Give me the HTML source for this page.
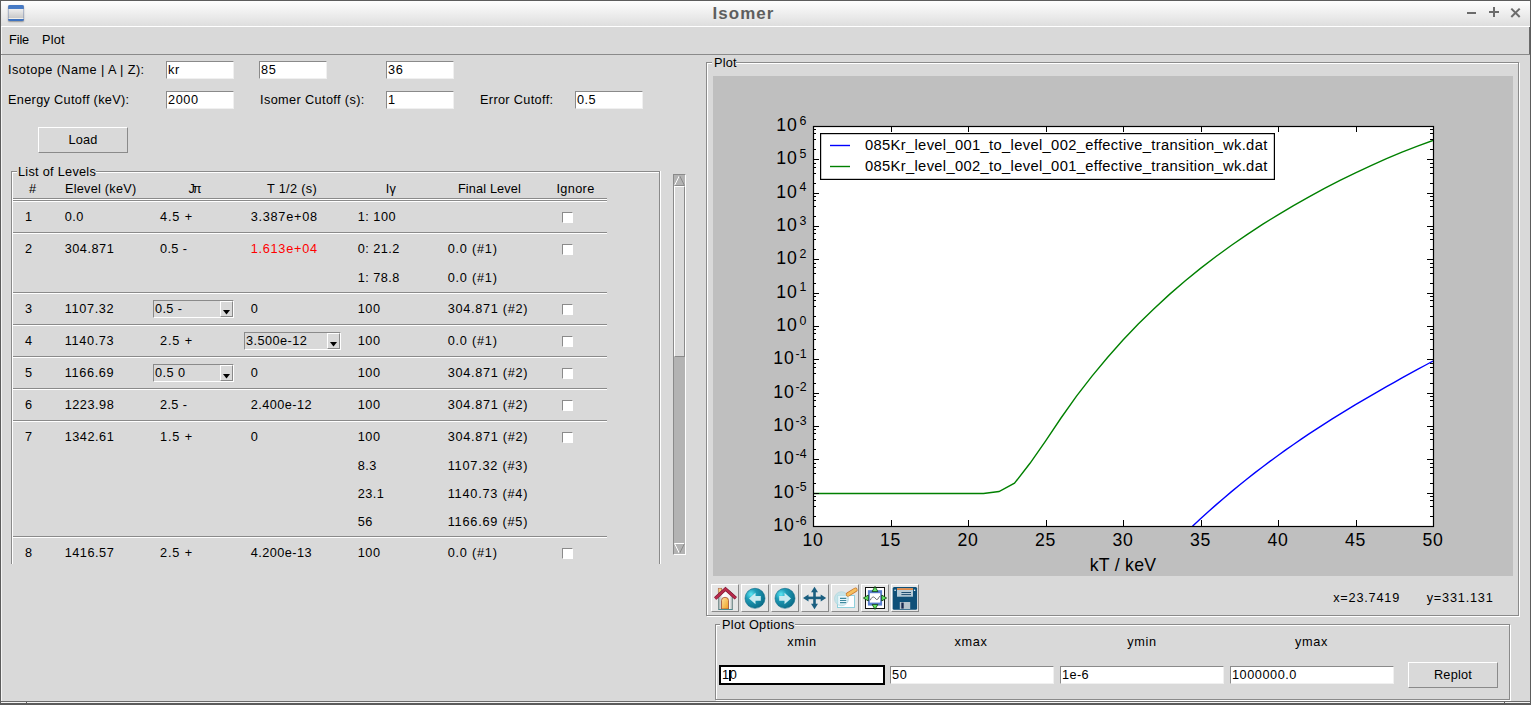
<!DOCTYPE html>
<html><head><meta charset="utf-8"><title>Isomer</title>
<style>
html,body{margin:0;padding:0;}
body{width:1531px;height:705px;overflow:hidden;background:#d9d9d9;position:relative;font-family:"Liberation Sans",sans-serif;}
body>div,body>svg{position:absolute;}
.t{position:absolute;white-space:pre;line-height:1;color:#000;}
</style></head><body>
<div style="left:0;top:0;width:1531px;height:26px;background:linear-gradient(#ffffff,#dedede)"></div>
<div style="left:0px;top:0px;width:1531px;height:1px;background:#5c5c5c"></div>
<div style="left:1px;top:26px;width:1529px;height:1px;background:#ffffff"></div>
<div style="left:0px;top:0px;width:1px;height:705px;background:#5c5c5c"></div>
<div style="left:1px;top:27px;width:1px;height:674px;background:#f4f4f4"></div>
<div style="left:1530px;top:0px;width:1px;height:705px;background:#5c5c5c"></div>
<div style="left:1529px;top:27px;width:1px;height:27px;background:#6a6a6a"></div>
<div style="left:1px;top:54px;width:1529px;height:1px;background:#8a8a8a"></div>
<div style="left:1px;top:701px;width:1529px;height:1px;background:#6a6a6a"></div>
<div style="left:1px;top:702px;width:1529px;height:1px;background:#f4f4f4"></div>
<div style="left:0px;top:703px;width:1531px;height:2px;background:#5c5c5c"></div>
<div style="left:26px;top:702px;width:1px;height:3px;background:#5c5c5c"></div>
<div style="left:1504px;top:702px;width:1px;height:3px;background:#5c5c5c"></div>
<div style="left:8px;top:5px;width:16px;height:15.5px;border-radius:1.5px;background:linear-gradient(#4277c4 0,#4a7dc6 4.5px,#ececec 4.5px,#c9c9c9 13px,#f0eee8 13px,#f0eee8 14px,#3f73c0 14px,#3f73c0 15.5px);box-shadow:0 1px 1.5px rgba(0,0,0,.35), inset 1px 0 0 rgba(110,130,170,.45), inset -1px 0 0 rgba(110,130,170,.45)"></div>
<div style="left:1467px;top:12px;width:9px;height:2px;background:#6b6b6b"></div>
<div style="left:1489px;top:11px;width:10px;height:2px;background:#6b6b6b"></div>
<div style="left:1493px;top:7px;width:2px;height:10px;background:#6b6b6b"></div>
<svg style="left:1508px;top:6px" width="14" height="14"><path d="M3.3 2.6L11.7 11M11.7 2.6L3.3 11" stroke="#6b6b6b" stroke-width="2"/></svg>
<div style="left:166px;top:61px;width:68px;height:18px;background:#fff;border-style:solid;border-width:1px;border-color:#8a8a8a #f0f0f0 #f0f0f0 #8a8a8a;box-sizing:border-box"></div>
<div style="left:259px;top:61px;width:68px;height:18px;background:#fff;border-style:solid;border-width:1px;border-color:#8a8a8a #f0f0f0 #f0f0f0 #8a8a8a;box-sizing:border-box"></div>
<div style="left:386px;top:61px;width:68px;height:18px;background:#fff;border-style:solid;border-width:1px;border-color:#8a8a8a #f0f0f0 #f0f0f0 #8a8a8a;box-sizing:border-box"></div>
<div style="left:166px;top:91px;width:68px;height:18px;background:#fff;border-style:solid;border-width:1px;border-color:#8a8a8a #f0f0f0 #f0f0f0 #8a8a8a;box-sizing:border-box"></div>
<div style="left:386px;top:91px;width:68px;height:18px;background:#fff;border-style:solid;border-width:1px;border-color:#8a8a8a #f0f0f0 #f0f0f0 #8a8a8a;box-sizing:border-box"></div>
<div style="left:575px;top:91px;width:68px;height:18px;background:#fff;border-style:solid;border-width:1px;border-color:#8a8a8a #f0f0f0 #f0f0f0 #8a8a8a;box-sizing:border-box"></div>
<div style="left:38px;top:127px;width:90px;height:26px;background:#d9d9d9;border-style:solid;border-width:1px;border-color:#ffffff #8a8a8a #8a8a8a #ffffff;box-sizing:border-box"></div>
<div style="left:11px;top:171px;width:649px;height:1px;background:#8a8a8a"></div>
<div style="left:12px;top:172px;width:648px;height:1px;background:#ffffff"></div>
<div style="left:11px;top:171px;width:1px;height:393px;background:#8a8a8a"></div>
<div style="left:12px;top:172px;width:1px;height:392px;background:#ffffff"></div>
<div style="left:659px;top:172px;width:1px;height:392px;background:#8a8a8a"></div>
<div style="left:660px;top:171px;width:1px;height:393px;background:#ffffff"></div>
<div style="left:17px;top:160px;width:79px;height:18px;background:#d9d9d9"></div>
<div style="left:13px;top:198px;width:594px;height:1px;background:#8a8a8a"></div>
<div style="left:13px;top:199px;width:594px;height:1px;background:#ffffff"></div>
<div style="left:13px;top:200px;width:594px;height:1px;background:#8a8a8a"></div>
<div style="left:13px;top:201px;width:594px;height:1px;background:#ffffff"></div>
<div style="left:13px;top:232px;width:594px;height:1px;background:#8a8a8a"></div>
<div style="left:13px;top:233px;width:594px;height:1px;background:#ffffff"></div>
<div style="left:13px;top:292px;width:594px;height:1px;background:#8a8a8a"></div>
<div style="left:13px;top:293px;width:594px;height:1px;background:#ffffff"></div>
<div style="left:13px;top:324px;width:594px;height:1px;background:#8a8a8a"></div>
<div style="left:13px;top:325px;width:594px;height:1px;background:#ffffff"></div>
<div style="left:13px;top:356px;width:594px;height:1px;background:#8a8a8a"></div>
<div style="left:13px;top:357px;width:594px;height:1px;background:#ffffff"></div>
<div style="left:13px;top:388px;width:594px;height:1px;background:#8a8a8a"></div>
<div style="left:13px;top:389px;width:594px;height:1px;background:#ffffff"></div>
<div style="left:13px;top:420px;width:594px;height:1px;background:#8a8a8a"></div>
<div style="left:13px;top:421px;width:594px;height:1px;background:#ffffff"></div>
<div style="left:13px;top:536px;width:594px;height:1px;background:#8a8a8a"></div>
<div style="left:13px;top:537px;width:594px;height:1px;background:#ffffff"></div>
<div style="left:562px;top:212px;width:11px;height:11px;background:#fff;border-style:solid;border-width:1px;border-color:#8a8a8a #fff #fff #8a8a8a;box-sizing:border-box"></div>
<div style="left:562px;top:244px;width:11px;height:11px;background:#fff;border-style:solid;border-width:1px;border-color:#8a8a8a #fff #fff #8a8a8a;box-sizing:border-box"></div>
<div style="left:562px;top:304px;width:11px;height:11px;background:#fff;border-style:solid;border-width:1px;border-color:#8a8a8a #fff #fff #8a8a8a;box-sizing:border-box"></div>
<div style="left:562px;top:336px;width:11px;height:11px;background:#fff;border-style:solid;border-width:1px;border-color:#8a8a8a #fff #fff #8a8a8a;box-sizing:border-box"></div>
<div style="left:562px;top:368px;width:11px;height:11px;background:#fff;border-style:solid;border-width:1px;border-color:#8a8a8a #fff #fff #8a8a8a;box-sizing:border-box"></div>
<div style="left:562px;top:400px;width:11px;height:11px;background:#fff;border-style:solid;border-width:1px;border-color:#8a8a8a #fff #fff #8a8a8a;box-sizing:border-box"></div>
<div style="left:562px;top:432px;width:11px;height:11px;background:#fff;border-style:solid;border-width:1px;border-color:#8a8a8a #fff #fff #8a8a8a;box-sizing:border-box"></div>
<div style="left:562px;top:548px;width:11px;height:11px;background:#fff;border-style:solid;border-width:1px;border-color:#8a8a8a #fff #fff #8a8a8a;box-sizing:border-box"></div>
<div style="left:153px;top:300px;width:81px;height:18px;background:#d9d9d9;border-style:solid;border-width:1px;border-color:#8a8a8a #ffffff #ffffff #8a8a8a;box-sizing:border-box"></div>
<div style="left:220px;top:301px;width:13px;height:16px;background:#d9d9d9;border-style:solid;border-width:1px;border-color:#ffffff #8a8a8a #8a8a8a #ffffff;box-sizing:border-box"></div>
<svg style="left:223px;top:310px" width="8" height="5"><path d="M0 0H7L3.5 4.5Z" fill="#000"/></svg>
<div style="left:244px;top:332px;width:97px;height:18px;background:#d9d9d9;border-style:solid;border-width:1px;border-color:#8a8a8a #ffffff #ffffff #8a8a8a;box-sizing:border-box"></div>
<div style="left:327px;top:333px;width:13px;height:16px;background:#d9d9d9;border-style:solid;border-width:1px;border-color:#ffffff #8a8a8a #8a8a8a #ffffff;box-sizing:border-box"></div>
<svg style="left:330px;top:342px" width="8" height="5"><path d="M0 0H7L3.5 4.5Z" fill="#000"/></svg>
<div style="left:153px;top:364px;width:81px;height:18px;background:#d9d9d9;border-style:solid;border-width:1px;border-color:#8a8a8a #ffffff #ffffff #8a8a8a;box-sizing:border-box"></div>
<div style="left:220px;top:365px;width:13px;height:16px;background:#d9d9d9;border-style:solid;border-width:1px;border-color:#ffffff #8a8a8a #8a8a8a #ffffff;box-sizing:border-box"></div>
<svg style="left:223px;top:374px" width="8" height="5"><path d="M0 0H7L3.5 4.5Z" fill="#000"/></svg>
<div style="left:673px;top:174px;width:13px;height:381px;background:#b3b3b3;border-style:solid;border-width:1px;border-color:#8a8a8a #ffffff #ffffff #8a8a8a;box-sizing:border-box"></div>
<svg style="left:674px;top:175px" width="11" height="11"><path d="M0.5 10.5L5.5 0.5" stroke="#fff"/><path d="M5.5 0.5L10.5 10.5" stroke="#8a8a8a"/><path d="M0.5 10.5H10.5" stroke="#8a8a8a"/></svg>
<div style="left:674px;top:186px;width:11px;height:171px;background:#d9d9d9;border-style:solid;border-width:1px;border-color:#ffffff #8a8a8a #8a8a8a #ffffff;box-sizing:border-box"></div>
<svg style="left:674px;top:543px" width="11" height="11"><path d="M0.5 0.5H10.5" stroke="#fff"/><path d="M0.5 0.5L5.5 10.5" stroke="#fff"/><path d="M10.5 0.5L5.5 10.5" stroke="#8a8a8a"/></svg>
<div style="left:707px;top:63px;width:813px;height:554px;border:1px solid #ffffff;box-sizing:border-box"></div>
<div style="left:706px;top:62px;width:813px;height:554px;border:1px solid #8a8a8a;box-sizing:border-box"></div>
<div style="left:712px;top:55px;width:24px;height:16px;background:#d9d9d9"></div>
<div style="left:713px;top:76px;width:800px;height:500px;background:#bfbfbf"></div>
<div style="left:711px;top:584px;width:28px;height:28px;background:#e6e6e6;border-style:solid;border-width:1px;border-color:#ffffff #8a8a8a #8a8a8a #ffffff;box-sizing:border-box"></div>
<div style="left:741px;top:584px;width:28px;height:28px;background:#e6e6e6;border-style:solid;border-width:1px;border-color:#ffffff #8a8a8a #8a8a8a #ffffff;box-sizing:border-box"></div>
<div style="left:771px;top:584px;width:28px;height:28px;background:#e6e6e6;border-style:solid;border-width:1px;border-color:#ffffff #8a8a8a #8a8a8a #ffffff;box-sizing:border-box"></div>
<div style="left:801px;top:584px;width:28px;height:28px;background:#e6e6e6;border-style:solid;border-width:1px;border-color:#ffffff #8a8a8a #8a8a8a #ffffff;box-sizing:border-box"></div>
<div style="left:831px;top:584px;width:28px;height:28px;background:#e6e6e6;border-style:solid;border-width:1px;border-color:#ffffff #8a8a8a #8a8a8a #ffffff;box-sizing:border-box"></div>
<div style="left:861px;top:584px;width:28px;height:28px;background:#e6e6e6;border-style:solid;border-width:1px;border-color:#ffffff #8a8a8a #8a8a8a #ffffff;box-sizing:border-box"></div>
<div style="left:891px;top:584px;width:28px;height:28px;background:#e6e6e6;border-style:solid;border-width:1px;border-color:#ffffff #8a8a8a #8a8a8a #ffffff;box-sizing:border-box"></div>
<div style="left:716px;top:625px;width:795px;height:76px;border:1px solid #ffffff;box-sizing:border-box"></div>
<div style="left:715px;top:624px;width:795px;height:76px;border:1px solid #8a8a8a;box-sizing:border-box"></div>
<div style="left:720px;top:618px;width:75px;height:12px;background:#d9d9d9"></div>
<div style="left:719px;top:665px;width:166px;height:20px;background:#fff;border:2px solid #000;box-sizing:border-box"></div>
<div style="left:729px;top:670px;width:2px;height:11px;background:#000"></div>
<div style="left:890px;top:666px;width:164px;height:18px;background:#fff;border-style:solid;border-width:1px;border-color:#8a8a8a #f0f0f0 #f0f0f0 #8a8a8a;box-sizing:border-box"></div>
<div style="left:1060px;top:666px;width:164px;height:18px;background:#fff;border-style:solid;border-width:1px;border-color:#8a8a8a #f0f0f0 #f0f0f0 #8a8a8a;box-sizing:border-box"></div>
<div style="left:1230px;top:666px;width:164px;height:18px;background:#fff;border-style:solid;border-width:1px;border-color:#8a8a8a #f0f0f0 #f0f0f0 #8a8a8a;box-sizing:border-box"></div>
<div style="left:1408px;top:662px;width:90px;height:26px;background:#d9d9d9;border-style:solid;border-width:1px;border-color:#ffffff #8a8a8a #8a8a8a #ffffff;box-sizing:border-box"></div>
<svg style="left:713px;top:76px" width="800" height="500"><rect x="0" y="0" width="800" height="500" fill="#bfbfbf"/><rect x="100" y="50" width="620" height="400" fill="#fff"/><defs><clipPath id="ac"><rect x="100" y="50" width="620" height="400"/></clipPath></defs><g clip-path="url(#ac)"><path d="M456.50 472.79 L464.25 465.00 L472.00 457.41 L479.75 450.00 L487.50 442.78 L495.25 435.74 L503.00 428.87 L510.75 422.16 L518.50 415.62 L526.25 409.23 L534.00 403.00 L541.75 396.91 L549.50 390.96 L557.25 385.15 L565.00 379.47 L572.75 373.92 L580.50 368.48 L588.25 363.16 L596.00 357.94 L603.75 352.83 L611.50 347.82 L619.25 342.91 L627.00 338.08 L634.75 333.33 L642.50 328.66 L650.25 324.06 L658.00 319.53 L665.75 315.06 L673.50 310.65 L681.25 306.29 L689.00 301.97 L696.75 297.70 L704.50 293.46 L712.25 289.25 L720.00 285.06" fill="none" stroke="#0000ff" stroke-width="1.4"/><path d="M100.00 417.50 L270.50 417.50 L286.00 415.50 L301.50 407.20 L317.00 387.30 L332.50 365.10 L348.00 342.00 L363.50 320.14 L379.00 300.13 L394.50 281.48 L410.00 264.09 L425.50 247.85 L441.00 232.64 L456.50 218.39 L472.00 205.00 L487.50 192.39 L503.00 180.49 L518.50 169.24 L534.00 158.57 L549.50 148.43 L565.00 138.79 L580.50 129.59 L596.00 120.82 L611.50 112.44 L627.00 104.44 L642.50 96.81 L658.00 89.55 L673.50 82.67 L689.00 76.17 L704.50 70.07 L720.00 64.40" fill="none" stroke="#008000" stroke-width="1.4"/></g><path d="M100.5 50v6M100.5 450v-6M178.5 50v6M178.5 450v-6M255.5 50v6M255.5 450v-6M333.5 50v6M333.5 450v-6M410.5 50v6M410.5 450v-6M488.5 50v6M488.5 450v-6M565.5 50v6M565.5 450v-6M643.5 50v6M643.5 450v-6M720.5 50v6M720.5 450v-6M100 450.50h6M720 450.50h-6M100 440.50h3M720 440.50h-3M100 430.50h3M720 430.50h-3M100 424.50h3M720 424.50h-3M100 420.50h3M720 420.50h-3M100 417.50h6M720 417.50h-6M100 407.50h3M720 407.50h-3M100 397.50h3M720 397.50h-3M100 391.50h3M720 391.50h-3M100 387.50h3M720 387.50h-3M100 383.50h6M720 383.50h-6M100 373.50h3M720 373.50h-3M100 363.50h3M720 363.50h-3M100 357.50h3M720 357.50h-3M100 353.50h3M720 353.50h-3M100 350.50h6M720 350.50h-6M100 340.50h3M720 340.50h-3M100 330.50h3M720 330.50h-3M100 324.50h3M720 324.50h-3M100 320.50h3M720 320.50h-3M100 317.50h6M720 317.50h-6M100 307.50h3M720 307.50h-3M100 297.50h3M720 297.50h-3M100 291.50h3M720 291.50h-3M100 287.50h3M720 287.50h-3M100 283.50h6M720 283.50h-6M100 273.50h3M720 273.50h-3M100 263.50h3M720 263.50h-3M100 257.50h3M720 257.50h-3M100 253.50h3M720 253.50h-3M100 250.50h6M720 250.50h-6M100 240.50h3M720 240.50h-3M100 230.50h3M720 230.50h-3M100 224.50h3M720 224.50h-3M100 220.50h3M720 220.50h-3M100 217.50h6M720 217.50h-6M100 207.50h3M720 207.50h-3M100 197.50h3M720 197.50h-3M100 191.50h3M720 191.50h-3M100 187.50h3M720 187.50h-3M100 183.50h6M720 183.50h-6M100 173.50h3M720 173.50h-3M100 163.50h3M720 163.50h-3M100 157.50h3M720 157.50h-3M100 153.50h3M720 153.50h-3M100 150.50h6M720 150.50h-6M100 140.50h3M720 140.50h-3M100 130.50h3M720 130.50h-3M100 124.50h3M720 124.50h-3M100 120.50h3M720 120.50h-3M100 117.50h6M720 117.50h-6M100 107.50h3M720 107.50h-3M100 97.50h3M720 97.50h-3M100 91.50h3M720 91.50h-3M100 87.50h3M720 87.50h-3M100 83.50h6M720 83.50h-6M100 73.50h3M720 73.50h-3M100 63.50h3M720 63.50h-3M100 57.50h3M720 57.50h-3M100 53.50h3M720 53.50h-3M100 50.50h6M720 50.50h-6" stroke="#000" stroke-width="1" fill="none"/><rect x="100.5" y="50.5" width="620" height="400" fill="none" stroke="#000" stroke-width="1.2"/><rect x="107.60000000000002" y="57.599999999999994" width="453.8" height="45.8" fill="#fff" stroke="#000" stroke-width="1.2"/><path d="M117 69.5h20" stroke="#0000ff" stroke-width="1.4"/><path d="M117 90.5h20" stroke="#008000" stroke-width="1.4"/></svg>
<svg style="left:711px;top:584px" width="210" height="28" viewBox="711 584 210 28">
<defs>
<radialGradient id="bl" cx="0.3" cy="0.3" r="0.8"><stop offset="0" stop-color="#5ee8f5"/><stop offset="0.35" stop-color="#1d9ab5"/><stop offset="1" stop-color="#0b6a85"/></radialGradient>
<linearGradient id="dr" x1="0" y1="0" x2="1" y2="1"><stop offset="0" stop-color="#fde3a0"/><stop offset="1" stop-color="#f0a020"/></linearGradient>
<linearGradient id="wl" x1="0" y1="0" x2="1" y2="0"><stop offset="0" stop-color="#9aa8a8"/><stop offset="0.3" stop-color="#ffffff"/><stop offset="0.8" stop-color="#f4f4f4"/><stop offset="1" stop-color="#9aa8a8"/></linearGradient>
</defs>
<!-- home -->
<rect x="718.3" y="588.3" width="3.4" height="5" fill="#f6cf78" stroke="#b06a50" stroke-width="0.7"/>
<path d="M718.5 593.5L725.5 588L732.5 593.5V609.5H718.5Z" fill="url(#wl)" stroke="#7f9494" stroke-width="1"/>
<path d="M721.5 609V600.3Q721.5 597.3 725 597.3Q728.5 597.3 728.5 600.3V609Z" fill="url(#dr)" stroke="#a04a30" stroke-width="0.8"/>
<path d="M715.2 598.6L725.5 589L735.8 598.2" fill="none" stroke="#7c1730" stroke-width="3.4"/><path d="M715.2 598.6L725.5 589L735.8 598.2" fill="none" stroke="#b82a4c" stroke-width="2.2"/>
<path d="M718.5 609.5H732.5" stroke="#4f8a90" stroke-width="1"/>
<!-- back -->
<circle cx="755" cy="598.3" r="10" fill="url(#bl)" stroke="#0d6a88" stroke-width="0.6"/>
<path d="M749 598.5L755.5 592.8V596H760.8V600.8H755.5V604.3Z" fill="#c9eaf0"/>
<!-- forward -->
<circle cx="785" cy="598.3" r="10" fill="url(#bl)" stroke="#0d6a88" stroke-width="0.6"/>
<path d="M791 598.5L784.5 592.8V596H779.2V600.8H784.5V604.3Z" fill="#c9eaf0"/>
<!-- move -->
<g fill="#1b5f80">
<rect x="807" y="596.6" width="16" height="2.6"/>
<rect x="813.2" y="590" width="2.6" height="16"/>
<path d="M803 597.9L808.5 594.4V601.4Z"/><path d="M826.2 597.9L820.7 594.4V601.4Z"/>
<path d="M814.5 586.8L811 592.3H818Z"/><path d="M814.5 609.2L811 603.7H818Z"/>
</g>
<!-- subplots -->
<rect x="837.5" y="595.5" width="17" height="12" fill="#fdfdff" stroke="#8fd0dc" stroke-width="1"/>
<circle cx="841.5" cy="598.7" r="7" fill="#bfe2e8" fill-opacity="0.8" stroke="#a8d4dc" stroke-width="0.6"/>
<rect x="838.3" y="595.9" width="8.6" height="8.4" fill="#e8f6fa"/>
<path d="M840 598.4h6.3M840 600.5h6.3M840 602.6h6.3" stroke="#3f8aa0" stroke-width="1.1"/>
<path d="M848 594.4L855.4 589.8" stroke="#c8742a" stroke-width="4.4" stroke-linecap="round"/>
<path d="M848 594.4L855.4 589.8" stroke="#f6c060" stroke-width="3" stroke-linecap="round"/>
<!-- zoom rect -->
<rect x="865.5" y="587.5" width="19" height="21" fill="#fff" stroke="#111" stroke-width="1"/>
<rect x="867.9" y="590.2" width="14.2" height="15.4" fill="#5a7fd0"/>
<rect x="869.8" y="593.2" width="10.4" height="9.4" fill="#fff"/>
<path d="M870.2 600.3Q872.3 595.6 874.6 597.5Q876.8 600.8 877.8 599.2Q879 596.8 880.2 596" fill="none" stroke="#333" stroke-width="0.7"/>
<g fill="#62e862" stroke="#0c3a0c" stroke-width="0.8" stroke-linejoin="round">
<path d="M875 586.4L872.1 591.6H877.9Z"/><path d="M875 609.4L872.1 604.4H877.9Z"/>
<path d="M863.4 598L868.3 595V601Z"/><path d="M886.6 598L881.7 595V601Z"/>
</g>
<!-- save -->
<rect x="892.7" y="587" width="24.4" height="22.8" rx="1.5" fill="#0f5078"/>
<rect x="897" y="588.2" width="16" height="8.5" fill="#b8ccd8"/>
<rect x="897" y="588.2" width="16" height="1.8" fill="#e08a48"/>
<path d="M901.4 592.5h9.6M901.4 594.6h9.6" stroke="#1e4e70" stroke-width="1"/>
<rect x="899.8" y="602" width="10.4" height="7" fill="#b8c4cc"/>
<rect x="901.3" y="602.6" width="2.4" height="6" fill="#1a2a50"/>
<circle cx="895.1" cy="590.2" r="0.8" fill="#fff"/><circle cx="914.6" cy="590.2" r="0.8" fill="#fff"/>
</svg>

<div class="t" style="left:712.55px;top:6.00px;font-size:16.96px;letter-spacing:1.057px;font-weight:700;color:#5e5e5e">Isomer</div>
<div class="t" style="left:9.00px;top:34.00px;font-size:12.72px;letter-spacing:-0.102px">File</div>
<div class="t" style="left:42.00px;top:34.00px;font-size:12.72px;letter-spacing:0.176px">Plot</div>
<div class="t" style="left:8.00px;top:64.00px;font-size:12.72px;letter-spacing:0.426px">Isotope (Name | A | Z):</div>
<div class="t" style="left:8.00px;top:94.00px;font-size:12.72px;letter-spacing:0.323px">Energy Cutoff (keV):</div>
<div class="t" style="left:260.00px;top:94.00px;font-size:12.72px;letter-spacing:0.373px">Isomer Cutoff (s):</div>
<div class="t" style="left:480.00px;top:94.00px;font-size:12.72px;letter-spacing:0.335px">Error Cutoff:</div>
<div class="t" style="left:168.00px;top:64.00px;font-size:12.72px;letter-spacing:0.641px">kr</div>
<div class="t" style="left:261.00px;top:64.00px;font-size:12.72px;letter-spacing:0.562px">85</div>
<div class="t" style="left:388.00px;top:64.00px;font-size:12.72px;letter-spacing:0.562px">36</div>
<div class="t" style="left:168.00px;top:94.00px;font-size:12.72px;letter-spacing:0.562px">2000</div>
<div class="t" style="left:388.00px;top:94.00px;font-size:12.72px;letter-spacing:0.562px">1</div>
<div class="t" style="left:577.00px;top:94.00px;font-size:12.72px;letter-spacing:0.469px">0.5</div>
<div class="t" style="left:68.60px;top:134.00px;font-size:12.72px;letter-spacing:0.125px">Load</div>
<div class="t" style="left:18.00px;top:166.00px;font-size:12.72px;letter-spacing:0.277px">List of Levels</div>
<div class="t" style="left:28.97px;top:183.00px;font-size:12.72px;letter-spacing:2.984px">#</div>
<div class="t" style="left:65.00px;top:183.00px;font-size:12.72px;letter-spacing:0.238px">Elevel (keV)</div>
<div class="t" style="left:188.62px;top:183.00px;font-size:12.72px;letter-spacing:-2.188px">Jπ</div>
<div class="t" style="left:267.05px;top:183.00px;font-size:12.72px;letter-spacing:0.307px">T 1/2 (s)</div>
<div class="t" style="left:385.68px;top:183.00px;font-size:12.72px;letter-spacing:0.367px">Iγ</div>
<div class="t" style="left:457.92px;top:183.00px;font-size:12.72px;letter-spacing:0.149px">Final Level</div>
<div class="t" style="left:556.42px;top:183.00px;font-size:12.72px;letter-spacing:0.346px">Ignore</div>
<div class="t" style="left:25.00px;top:211.00px;font-size:12.72px;letter-spacing:0.562px">1</div>
<div class="t" style="left:64.70px;top:211.00px;font-size:12.72px;letter-spacing:0.469px">0.0</div>
<div class="t" style="left:160.00px;top:211.00px;font-size:12.72px;letter-spacing:0.859px">4.5 +</div>
<div class="t" style="left:250.70px;top:211.00px;font-size:12.72px;letter-spacing:0.731px">3.387e+08</div>
<div class="t" style="left:357.70px;top:211.00px;font-size:12.72px;letter-spacing:0.505px">1: 100</div>
<div class="t" style="left:25.00px;top:243.00px;font-size:12.72px;letter-spacing:0.562px">2</div>
<div class="t" style="left:64.70px;top:243.00px;font-size:12.72px;letter-spacing:0.520px">304.871</div>
<div class="t" style="left:160.00px;top:243.00px;font-size:12.72px;letter-spacing:0.356px">0.5 -</div>
<div class="t" style="left:250.70px;top:243.00px;font-size:12.72px;letter-spacing:0.731px;color:#ff0000">1.613e+04</div>
<div class="t" style="left:357.70px;top:243.00px;font-size:12.72px;letter-spacing:0.473px">0: 21.2</div>
<div class="t" style="left:447.70px;top:243.00px;font-size:12.72px;letter-spacing:0.764px">0.0 (#1)</div>
<div class="t" style="left:357.70px;top:272.00px;font-size:12.72px;letter-spacing:0.473px">1: 78.8</div>
<div class="t" style="left:447.70px;top:272.00px;font-size:12.72px;letter-spacing:0.764px">0.0 (#1)</div>
<div class="t" style="left:25.00px;top:303.00px;font-size:12.72px;letter-spacing:0.562px">3</div>
<div class="t" style="left:64.70px;top:303.00px;font-size:12.72px;letter-spacing:0.656px">1107.32</div>
<div class="t" style="left:250.70px;top:303.00px;font-size:12.72px;letter-spacing:0.562px">0</div>
<div class="t" style="left:357.70px;top:303.00px;font-size:12.72px;letter-spacing:0.557px">100</div>
<div class="t" style="left:447.70px;top:303.00px;font-size:12.72px;letter-spacing:0.697px">304.871 (#2)</div>
<div class="t" style="left:25.00px;top:335.00px;font-size:12.72px;letter-spacing:0.562px">4</div>
<div class="t" style="left:64.70px;top:335.00px;font-size:12.72px;letter-spacing:0.656px">1140.73</div>
<div class="t" style="left:160.00px;top:335.00px;font-size:12.72px;letter-spacing:0.859px">2.5 +</div>
<div class="t" style="left:357.70px;top:335.00px;font-size:12.72px;letter-spacing:0.557px">100</div>
<div class="t" style="left:447.70px;top:335.00px;font-size:12.72px;letter-spacing:0.764px">0.0 (#1)</div>
<div class="t" style="left:25.00px;top:367.00px;font-size:12.72px;letter-spacing:0.562px">5</div>
<div class="t" style="left:64.70px;top:367.00px;font-size:12.72px;letter-spacing:0.656px">1166.69</div>
<div class="t" style="left:250.70px;top:367.00px;font-size:12.72px;letter-spacing:0.562px">0</div>
<div class="t" style="left:357.70px;top:367.00px;font-size:12.72px;letter-spacing:0.557px">100</div>
<div class="t" style="left:447.70px;top:367.00px;font-size:12.72px;letter-spacing:0.697px">304.871 (#2)</div>
<div class="t" style="left:25.00px;top:399.00px;font-size:12.72px;letter-spacing:0.562px">6</div>
<div class="t" style="left:64.70px;top:399.00px;font-size:12.72px;letter-spacing:0.520px">1223.98</div>
<div class="t" style="left:160.00px;top:399.00px;font-size:12.72px;letter-spacing:0.356px">2.5 -</div>
<div class="t" style="left:250.70px;top:399.00px;font-size:12.72px;letter-spacing:0.450px">2.400e-12</div>
<div class="t" style="left:357.70px;top:399.00px;font-size:12.72px;letter-spacing:0.557px">100</div>
<div class="t" style="left:447.70px;top:399.00px;font-size:12.72px;letter-spacing:0.697px">304.871 (#2)</div>
<div class="t" style="left:25.00px;top:431.00px;font-size:12.72px;letter-spacing:0.562px">7</div>
<div class="t" style="left:64.70px;top:431.00px;font-size:12.72px;letter-spacing:0.520px">1342.61</div>
<div class="t" style="left:160.00px;top:431.00px;font-size:12.72px;letter-spacing:0.859px">1.5 +</div>
<div class="t" style="left:250.70px;top:431.00px;font-size:12.72px;letter-spacing:0.562px">0</div>
<div class="t" style="left:357.70px;top:431.00px;font-size:12.72px;letter-spacing:0.557px">100</div>
<div class="t" style="left:447.70px;top:431.00px;font-size:12.72px;letter-spacing:0.697px">304.871 (#2)</div>
<div class="t" style="left:357.70px;top:460.00px;font-size:12.72px;letter-spacing:0.469px">8.3</div>
<div class="t" style="left:447.70px;top:460.00px;font-size:12.72px;letter-spacing:0.776px">1107.32 (#3)</div>
<div class="t" style="left:357.70px;top:488.00px;font-size:12.72px;letter-spacing:0.488px">23.1</div>
<div class="t" style="left:447.70px;top:488.00px;font-size:12.72px;letter-spacing:0.776px">1140.73 (#4)</div>
<div class="t" style="left:357.70px;top:516.00px;font-size:12.72px;letter-spacing:0.562px">56</div>
<div class="t" style="left:447.70px;top:516.00px;font-size:12.72px;letter-spacing:0.776px">1166.69 (#5)</div>
<div class="t" style="left:25.00px;top:547.00px;font-size:12.72px;letter-spacing:0.562px">8</div>
<div class="t" style="left:64.70px;top:547.00px;font-size:12.72px;letter-spacing:0.520px">1416.57</div>
<div class="t" style="left:160.00px;top:547.00px;font-size:12.72px;letter-spacing:0.859px">2.5 +</div>
<div class="t" style="left:250.70px;top:547.00px;font-size:12.72px;letter-spacing:0.450px">4.200e-13</div>
<div class="t" style="left:357.70px;top:547.00px;font-size:12.72px;letter-spacing:0.557px">100</div>
<div class="t" style="left:447.70px;top:547.00px;font-size:12.72px;letter-spacing:0.764px">0.0 (#1)</div>
<div class="t" style="left:155.00px;top:303.00px;font-size:12.72px;letter-spacing:0.356px">0.5 -</div>
<div class="t" style="left:246.00px;top:335.00px;font-size:12.72px;letter-spacing:0.450px">3.500e-12</div>
<div class="t" style="left:155.00px;top:367.00px;font-size:12.72px;letter-spacing:0.450px">0.5 0</div>
<div class="t" style="left:714.00px;top:57.00px;font-size:12.72px;letter-spacing:0.176px">Plot</div>
<div class="t" style="left:1333.22px;top:592.00px;font-size:12.72px;letter-spacing:0.780px">x=23.7419</div>
<div class="t" style="left:1426.72px;top:592.00px;font-size:12.72px;letter-spacing:0.780px">y=331.131</div>
<div class="t" style="left:722.00px;top:619.00px;font-size:12.72px;letter-spacing:0.286px">Plot Options</div>
<div class="t" style="left:787.13px;top:636.00px;font-size:12.72px;letter-spacing:0.719px">xmin</div>
<div class="t" style="left:954.38px;top:636.00px;font-size:12.72px;letter-spacing:0.715px">xmax</div>
<div class="t" style="left:1127.13px;top:636.00px;font-size:12.72px;letter-spacing:0.719px">ymin</div>
<div class="t" style="left:1294.88px;top:636.00px;font-size:12.72px;letter-spacing:0.715px">ymax</div>
<div class="t" style="left:722.00px;top:669.00px;font-size:12.72px;letter-spacing:0.562px">10</div>
<div class="t" style="left:892.00px;top:669.00px;font-size:12.72px;letter-spacing:0.562px">50</div>
<div class="t" style="left:1062.00px;top:669.00px;font-size:12.72px;letter-spacing:0.379px">1e-6</div>
<div class="t" style="left:1232.00px;top:669.00px;font-size:12.72px;letter-spacing:0.531px">1000000.0</div>
<div class="t" style="left:1433.91px;top:669.00px;font-size:12.72px;letter-spacing:0.237px">Replot</div>
<div class="t" style="left:865.00px;top:138.00px;font-size:14.72px;letter-spacing:0.341px">085Kr_level_001_to_level_002_effective_transition_wk.dat</div>
<div class="t" style="left:865.00px;top:159.00px;font-size:14.72px;letter-spacing:0.341px">085Kr_level_002_to_level_001_effective_transition_wk.dat</div>
<div class="t" style="left:802.40px;top:532.00px;font-size:17.67px;letter-spacing:0.781px">10</div>
<div class="t" style="left:879.90px;top:532.00px;font-size:17.67px;letter-spacing:0.781px">15</div>
<div class="t" style="left:957.40px;top:532.00px;font-size:17.67px;letter-spacing:0.781px">20</div>
<div class="t" style="left:1034.90px;top:532.00px;font-size:17.67px;letter-spacing:0.781px">25</div>
<div class="t" style="left:1112.40px;top:532.00px;font-size:17.67px;letter-spacing:0.781px">30</div>
<div class="t" style="left:1189.90px;top:532.00px;font-size:17.67px;letter-spacing:0.781px">35</div>
<div class="t" style="left:1267.40px;top:532.00px;font-size:17.67px;letter-spacing:0.781px">40</div>
<div class="t" style="left:1344.90px;top:532.00px;font-size:17.67px;letter-spacing:0.781px">45</div>
<div class="t" style="left:1422.40px;top:532.00px;font-size:17.67px;letter-spacing:0.781px">50</div>
<div class="t" style="left:1089.64px;top:557.00px;font-size:17.67px;letter-spacing:0.285px">kT / keV</div>
<div class="t" style="left:795.38px;top:514.80px;font-size:12.37px;letter-spacing:0.312px">-6</div>
<div class="t" style="left:773.30px;top:517.00px;font-size:17.67px;letter-spacing:0.781px">10</div>
<div class="t" style="left:795.38px;top:481.47px;font-size:12.37px;letter-spacing:0.312px">-5</div>
<div class="t" style="left:773.30px;top:483.67px;font-size:17.67px;letter-spacing:0.781px">10</div>
<div class="t" style="left:795.38px;top:448.13px;font-size:12.37px;letter-spacing:0.312px">-4</div>
<div class="t" style="left:773.30px;top:450.33px;font-size:17.67px;letter-spacing:0.781px">10</div>
<div class="t" style="left:795.38px;top:414.80px;font-size:12.37px;letter-spacing:0.312px">-3</div>
<div class="t" style="left:773.30px;top:417.00px;font-size:17.67px;letter-spacing:0.781px">10</div>
<div class="t" style="left:795.38px;top:381.47px;font-size:12.37px;letter-spacing:0.312px">-2</div>
<div class="t" style="left:773.30px;top:383.67px;font-size:17.67px;letter-spacing:0.781px">10</div>
<div class="t" style="left:795.38px;top:348.13px;font-size:12.37px;letter-spacing:0.312px">-1</div>
<div class="t" style="left:773.30px;top:350.33px;font-size:17.67px;letter-spacing:0.781px">10</div>
<div class="t" style="left:799.58px;top:314.80px;font-size:12.37px;letter-spacing:0.547px">0</div>
<div class="t" style="left:776.30px;top:317.00px;font-size:17.67px;letter-spacing:0.781px">10</div>
<div class="t" style="left:799.58px;top:281.47px;font-size:12.37px;letter-spacing:0.547px">1</div>
<div class="t" style="left:776.30px;top:283.67px;font-size:17.67px;letter-spacing:0.781px">10</div>
<div class="t" style="left:799.58px;top:248.13px;font-size:12.37px;letter-spacing:0.547px">2</div>
<div class="t" style="left:776.30px;top:250.33px;font-size:17.67px;letter-spacing:0.781px">10</div>
<div class="t" style="left:799.58px;top:214.80px;font-size:12.37px;letter-spacing:0.547px">3</div>
<div class="t" style="left:776.30px;top:217.00px;font-size:17.67px;letter-spacing:0.781px">10</div>
<div class="t" style="left:799.58px;top:181.47px;font-size:12.37px;letter-spacing:0.547px">4</div>
<div class="t" style="left:776.30px;top:183.67px;font-size:17.67px;letter-spacing:0.781px">10</div>
<div class="t" style="left:799.58px;top:148.13px;font-size:12.37px;letter-spacing:0.547px">5</div>
<div class="t" style="left:776.30px;top:150.33px;font-size:17.67px;letter-spacing:0.781px">10</div>
<div class="t" style="left:799.58px;top:114.80px;font-size:12.37px;letter-spacing:0.547px">6</div>
<div class="t" style="left:776.30px;top:117.00px;font-size:17.67px;letter-spacing:0.781px">10</div>
</body></html>
